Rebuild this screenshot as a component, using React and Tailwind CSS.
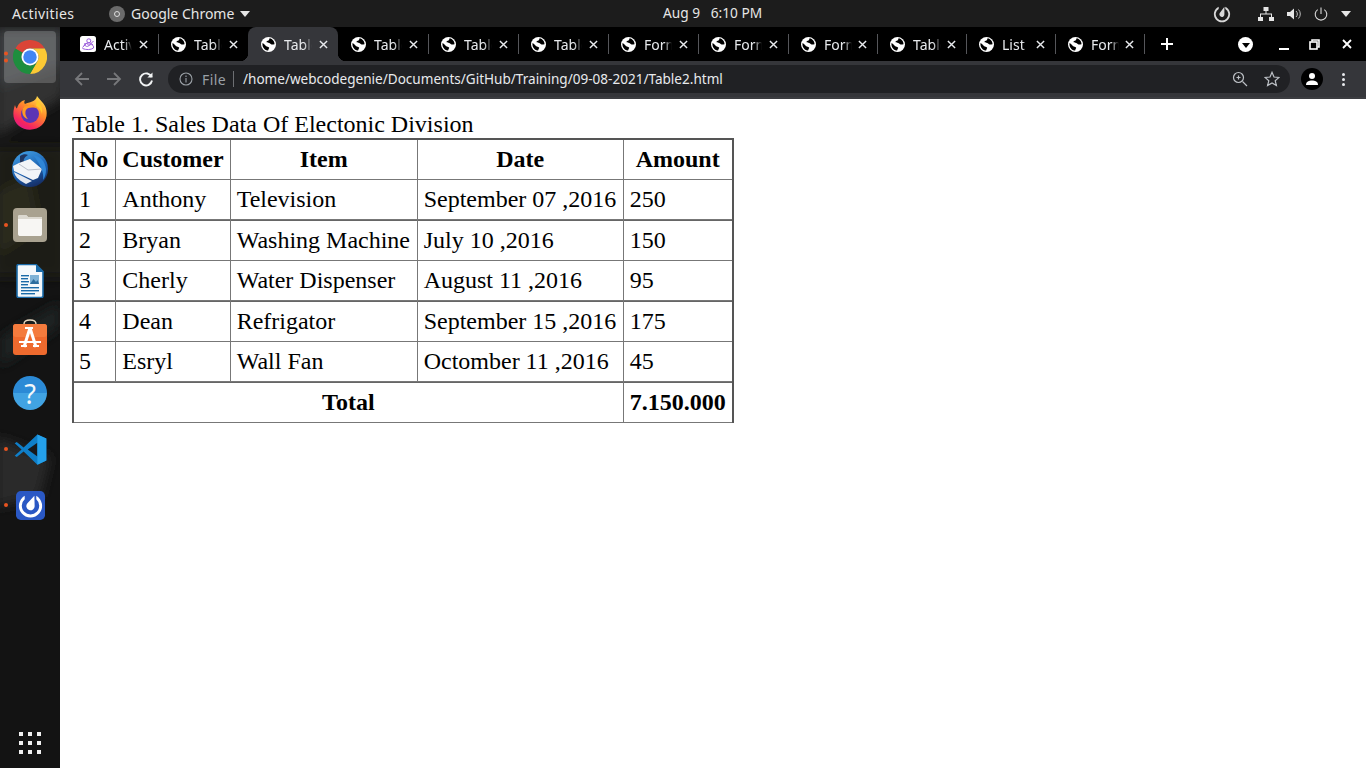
import React from "react";

const Globe = () => (
  <svg width="15" height="15" viewBox="0 0 16 16" className="ml-px shrink-0">
    <circle cx="8" cy="8" r="8" fill="#fff" />
    <path d="M9.2 1.2 C8.6 2.2 8.9 3 8 3.6 C7 4.2 6 4 5.9 5.1 C5.9 6 7.1 6 7.9 6.1 C9 6.2 9.8 6.9 10.7 7.6 C11.5 8.2 12.6 7.9 14.4 7.7 C14.6 4.6 12.3 1.8 9.2 1.2 Z" fill="#000" />
    <path d="M1.7 6.3 C1 9.2 2.6 12.6 5.7 14.1 C6.7 14.4 7.5 14.5 7.8 14.2 C7.8 13.2 8.5 12.6 8.7 11.8 C8.8 10.9 7.8 10.6 7 10.3 C5.9 10 5.1 9.5 4.5 8.7 C3.7 7.8 2.8 7 1.7 6.3 Z" fill="#000" />
  </svg>
);

const ActiIcon = () => (
  <svg width="16" height="16" viewBox="0 0 16 16" className="shrink-0">
    <rect width="16" height="16" rx="2.5" fill="#fff" />
    <g fill="none" stroke="#9a5bdc" strokeWidth="1">
      <path d="M2.5 11.5 L6.5 7 L9 9.5 L13.5 5" />
      <path d="M2.5 12.5 C6 14 11 14 13.5 12 C14 9 11 7.5 9 9.5 C7 11.5 4 10 5 7" />
      <circle cx="8.8" cy="4.8" r="2" />
      <path d="M4 10 C6 6 10 6 13 9" />
    </g>
  </svg>
);

const tabs = [
  ["Activity", "w-[90px]"],
  ["Table", "w-[90px]"],
  ["Table", "w-[90px]", true],
  ["Table", "w-[90px]"],
  ["Table", "w-[90px]"],
  ["Table", "w-[90px]"],
  ["Form", "w-[90px]"],
  ["Form", "w-[90px]"],
  ["Form", "w-[89px]"],
  ["Table", "w-[89px]"],
  ["List", "w-[89px]"],
  ["Form", "w-[89px]"],
];

const Close = ({ s = 9, c = "#e8eaed", w = 1.6 }) => (
  <svg width={s} height={s} viewBox="0 0 10 10" className="shrink-0">
    <path d="M1 1 L9 9 M9 1 L1 9" stroke={c} strokeWidth={w} />
  </svg>
);

function Tab({ title, width, active, first, hideSep }) {
  return (
    <div className={`relative flex h-[34px] shrink-0 items-center pl-3 pr-[10px] ${width} ${active ? "rounded-t-lg bg-[#35363a]" : ""}`}>
      {first ? <ActiIcon /> : <Globe />}
      <span className="ml-2 w-[28px] overflow-hidden whitespace-nowrap text-[14px] text-[#e8eaed] [mask-image:linear-gradient(to_right,black_72%,transparent_100%)]">
        {title}
      </span>
      <span className="ml-auto flex"><Close /></span>
      {!active && !hideSep && <span className="absolute right-[-1px] top-[7px] h-5 w-px bg-[#55565a]" />}
      {active && (
        <>
          <span className="absolute -left-2 bottom-0 h-2 w-2 bg-[radial-gradient(circle_at_0_0,#000_8px,#35363a_8.5px)]" />
          <span className="absolute -right-2 bottom-0 h-2 w-2 bg-[radial-gradient(circle_at_100%_0,#000_8px,#35363a_8.5px)]" />
        </>
      )}
    </div>
  );
}

const ChromeLogo = ({ size = 34 }) => (
  <svg width={size} height={size} viewBox="0 0 48 48">
    <path d="M3.2 12 A24 24 0 0 1 44.8 12 L24 12 A12 12 0 0 0 13.6 18 Z" fill="#db4437" />
    <path d="M44.8 12 A24 24 0 0 1 24 48 L34.4 30 A12 12 0 0 0 24 12 Z" fill="#fcc934" />
    <path d="M3.2 12 A24 24 0 0 0 24 48 L34.4 30 A12 12 0 0 1 13.6 18 Z" fill="#1e8e3e" />
    <circle cx="24" cy="24" r="12" fill="#fff" />
    <circle cx="24" cy="24" r="9.5" fill="#4285f4" />
  </svg>
);

const Firefox = () => (
  <svg width="36" height="36" viewBox="0 0 36 36">
    <defs>
      <linearGradient id="ff" x1="0.8" y1="0" x2="0.2" y2="1">
        <stop offset="0" stopColor="#ffe14d" />
        <stop offset="0.4" stopColor="#ff8a2a" />
        <stop offset="0.8" stopColor="#f5245f" />
        <stop offset="1" stopColor="#d91a8c" />
      </linearGradient>
    </defs>
    <path d="M25 1 C27 4 31 7 33 11 C36 17 35 25 30 30 C24 36 13 36 7 31 C1 26 0 18 3 10 C3.5 12 4 13 5 13.5 C6 9 9 6 13 5 C12 7 12 8 13 9 C17 7 24 7 25 1 Z" fill="url(#ff)" />
    <circle cx="18" cy="19" r="9" fill="#5b35b5" />
    <path d="M11 13 C15 8 23 9 26 14 C22 12 16 12 14 15 C13 17 13 21 16 24 C11 23 9 17 11 13 Z" fill="#ff9a24" />
    <path d="M25 5 C29 9 31 13 30 19 C29 15 27 12 24 11 Z" fill="#ffc928" />
  </svg>
);

const Thunderbird = () => (
  <svg width="36" height="36" viewBox="0 0 36 36">
    <defs>
      <linearGradient id="tb" x1="0.3" y1="0" x2="0.7" y2="1">
        <stop offset="0" stopColor="#3f9ae0" />
        <stop offset="0.55" stopColor="#1a5fb0" />
        <stop offset="1" stopColor="#15295e" />
      </linearGradient>
    </defs>
    <circle cx="18" cy="18" r="18" fill="url(#tb)" />
    <path d="M8 5 C11 3 14 3 16 4 C13 6 11 8 12 11 L8 13 Z" fill="#1f3560" />
    <path d="M1 15 L7 12 L18 8 L30 18 L26 27 L21 29 L2 20 Z" fill="#f2f4f8" />
    <path d="M7 13 L16 19 L30 18" fill="none" stroke="#a9b0bf" strokeWidth="0.8" />
    <path d="M2 21 L20 30 L14 33 C8 30 3 26 2 21 Z" fill="#e4e8f0" />
    <path d="M21 4 C28 5 33 10 34 18 C34 23 33 26 31 29 C32 23 30 15 21 4 Z" fill="#2f86d6" />
  </svg>
);

const Files = () => (
  <svg width="34" height="34" viewBox="0 0 34 34">
    <rect width="34" height="34" rx="4" fill="#a9a290" />
    <path d="M5 9 C5 7.5 6 7 7 7 H13 L15 9 H27 C28.5 9 29 10 29 11 V26 C29 27.5 28 28 27 28 H7 C6 28 5 27.5 5 26 Z" fill="#f7f6f3" />
    <path d="M5 9 C5 7.5 6 7 7 7 H13 L15 9 H29 V11 H5 Z" fill="#dcd9d0" />
  </svg>
);

const Writer = () => (
  <svg width="28" height="34" viewBox="0 0 28 34">
    <path d="M1 2 C1 1 2 0.5 3 0.5 H20 L27 7.5 V32 C27 33 26 33.5 25 33.5 H3 C2 33.5 1 33 1 32 Z" fill="#f4f8fb" stroke="#1a6aa8" strokeWidth="1.6" />
    <path d="M20 0.5 L27.5 8 H20 Z" fill="#1a6aa8" />
    <g fill="#1a6aa8">
      <rect x="5" y="11" width="8" height="1.4" />
      <rect x="5" y="14" width="7" height="1.4" />
      <rect x="5" y="17" width="8" height="1.4" />
      <rect x="5" y="20" width="7" height="1.4" />
      <rect x="5" y="23" width="18" height="1.4" />
      <rect x="5" y="26" width="18" height="1.4" />
      <rect x="5" y="29" width="14" height="1.4" />
    </g>
    <rect x="14" y="11" width="9" height="9" fill="#7fb2d6" />
    <path d="M14 20 L17.5 15 L20 18 L21.5 16 L23 20 Z" fill="#2d6d9e" />
  </svg>
);

const Store = () => (
  <svg width="34" height="36" viewBox="0 0 34 36">
    <path d="M11 8 V5 C11 2.5 13 1 17 1 C21 1 23 2.5 23 5 V8" fill="none" stroke="#e8d8c0" strokeWidth="1.4" />
    <rect y="5" width="34" height="31" rx="3" fill="#ee6a2e" />
    <rect y="5" width="34" height="13" rx="3" fill="#f47b3d" />
    <path d="M17 9 L11 28 M17 9 L23 28" stroke="#fff" strokeWidth="3" fill="none" />
    <path d="M12 9 H20 M6 23 H28 M8 27 H14 M20 27 H26" stroke="#fff" strokeWidth="2" fill="none" />
  </svg>
);

const Help = () => (
  <div className="flex h-[34px] w-[34px] items-center justify-center rounded-full bg-[linear-gradient(#2b8ad6_50%,#41a3e3_50%)] font-['Noto_Sans',sans-serif] text-[27px] font-normal leading-none text-[#f2f7fb]">
    ?
  </div>
);

const VSCode = () => (
  <svg width="33" height="33" viewBox="0 0 24 24">
    <path d="M17 1 L23.5 4 V20 L17 23 L7 13.5 L2 17.5 L0.5 16.5 L5.5 12 L0.5 7.5 L2 6.5 L7 10.5 Z" fill="#0f7fc9" />
    <path d="M17 7 L10 12 L17 17 Z" fill="#17191c" />
    <path d="M17 1 L23.5 4 V20 L17 23 Z" fill="#24a0ea" />
  </svg>
);

const Mattermost = ({ size = 30, bg = true, color = "#fff" }) => (
  <svg width={size} height={size} viewBox="0 0 30 30">
    {bg && <rect width="30" height="30" rx="5" fill="#2a58c4" />}
    <path d="M9 5 A12 12 0 1 0 21 5 L21 8.6 A9 9 0 1 1 9 8.6 Z" fill={color} />
    <path d="M19 5 L19.3 15.5 A4.3 4.3 0 1 1 11.6 13 Z" fill={color} />
  </svg>
);

const dockItems = [
  [<ChromeLogo key="a" />, 2, true],
  [<Firefox key="b" />, 0],
  [<Thunderbird key="c" />, 0],
  [<Files key="d" />, 1],
  [<Writer key="e" />, 0],
  [<Store key="f" />, 0],
  [<Help key="g" />, 0],
  [<VSCode key="h" />, 1],
  [<Mattermost key="i" size={29} />, 1],
];

function DockItem({ icon, dots, active }) {
  return (
    <div className="relative flex h-14 w-full items-center justify-center">
      {active && <div className="absolute inset-x-1 inset-y-[2px] rounded-[4px] bg-[#ffffff30]" />}
      <div className="relative flex h-9 w-9 items-center justify-center">{icon}</div>
      {dots > 0 && (
        <div className="absolute left-[4px] top-1/2 flex -translate-y-1/2 flex-col gap-[3px]">
          {Array.from({ length: dots }).map((_, i) => (
            <span key={i} className="h-1 w-1 rounded-full bg-[#e95420]" />
          ))}
        </div>
      )}
    </div>
  );
}

const rows = [
  ["1", "Anthony", "Television", "September 07 ,2016", "250"],
  ["2", "Bryan", "Washing Machine", "July 10 ,2016", "150"],
  ["3", "Cherly", "Water Dispenser", "August 11 ,2016", "95"],
  ["4", "Dean", "Refrigator", "September 15 ,2016", "175"],
  ["5", "Esryl", "Wall Fan", "Octomber 11 ,2016", "45"],
];

const tdc = "border border-[#777] px-[6px] py-[6.25px] text-left font-normal";
const thc = "border border-[#777] px-[6px] py-[5.9px] text-center font-bold";
const totalc = "border border-[#777] px-[6px] py-[6.25px] text-center font-bold shadow-[inset_0_1px_0_#666]";
const widths = ["pl-[5px] pr-[7px]", "", "min-w-[187px]", "min-w-[206px]", ""];

export default function App() {
  return (
    <div className="flex h-[768px] w-[1366px] flex-col overflow-hidden bg-white font-['Noto_Sans',sans-serif]">
      {/* top bar */}
      <div className="flex h-[27px] shrink-0 items-center bg-[#1c1c1c] text-[14px] text-[#e6e6e6]">
        <div className="flex w-[420px] items-center pl-3">
          <span className="w-[97px] tracking-[0.4px]">Activities</span>
          <span className="mr-1 flex h-4 w-4 items-center justify-center rounded-full bg-[#6b6b6b]">
            <span className="h-[6px] w-[6px] rounded-full border border-[#ddd]" />
          </span>
          <span className="ml-[2px]">Google Chrome</span>
          <svg width="10" height="6" viewBox="0 0 10 6" className="ml-[6px]"><path d="M0 0 H10 L5 6 Z" fill="#e6e6e6" /></svg>
        </div>
        <div className="ml-[243px] whitespace-pre text-[13.7px]">Aug 9   6:10 PM</div>
        <div className="ml-auto flex items-center pr-[15px]">
          <svg width="18" height="18" viewBox="0 0 30 30" className="mr-[27px]">
            <path d="M9.5 3 A13.5 13.5 0 1 0 20.5 3 L20.5 6.5 A10.5 10.5 0 1 1 9.5 6.5 Z" fill="#d8d8d8" />
            <path d="M19 3 L19 15.5 A4.2 4.2 0 1 1 11.6 13 Z" fill="#d8d8d8" />
          </svg>
          <svg width="16" height="14" viewBox="0 0 16 14" className="mr-[13px]" fill="#e6e6e6">
            <rect x="5.5" y="0" width="5" height="4" />
            <rect x="0" y="10" width="5" height="4" />
            <rect x="11" y="10" width="5" height="4" />
            <path d="M7.5 4 H8.5 V6.5 H14 V10 H13 V7.5 H3 V10 H2 V6.5 H7.5 Z" />
          </svg>
          <svg width="15" height="12" viewBox="0 0 15 12" className="mr-[12px]">
            <path d="M0 4 H3 L7 0.5 V11.5 L3 8 H0 Z" fill="#e6e6e6" />
            <path d="M9 3 A4 4 0 0 1 9 9 M11.5 1.5 A6.5 6.5 0 0 1 11.5 10.5" fill="none" stroke="#bbb" strokeWidth="1" />
          </svg>
          <svg width="14" height="14" viewBox="0 0 14 14" className="mr-[13px]" fill="none" stroke="#d8d8d8" strokeWidth="1.1">
            <path d="M7 0.5 V7 M3.7 2.6 A5.8 5.8 0 1 0 10.3 2.6" />
          </svg>
          <svg width="10" height="6" viewBox="0 0 10 6"><path d="M0 0 H10 L5 6 Z" fill="#e6e6e6" /></svg>
        </div>
      </div>

      <div className="flex min-h-0 flex-1">
        {/* dock */}
        <div className="relative flex w-[60px] shrink-0 flex-col overflow-hidden bg-[#131313] pt-[2px]">
          <svg className="absolute inset-0" width="60" height="741" viewBox="0 0 60 741">
            <defs>
              <filter id="bl"><feGaussianBlur stdDeviation="6" /></filter>
            </defs>
            <g filter="url(#bl)">
              <rect x="-5" y="0" width="70" height="60" fill="#3c4042" />
              <path d="M-5 62 L60 38 L65 70 L30 90 L-5 110 Z" fill="#303232" />
              <rect x="-5" y="120" width="70" height="130" fill="#1b1c15" />
              <path d="M-5 165 L30 150 L40 200 L-5 230 Z" fill="#2a2a1c" />
              <path d="M0 310 L60 275 L60 300 L0 340 Z" fill="#1d2020" />
              <path d="M-5 410 L50 430 L40 470 L-5 480 Z" fill="#2a2b2b" />
            </g>
          </svg>
          {dockItems.map(([icon, dots, active], i) => (
            <DockItem key={i} icon={icon} dots={dots} active={active} />
          ))}
          <div className="relative mt-auto mb-[14px] grid w-fit grid-cols-3 gap-[5px] self-center">
            {Array.from({ length: 9 }).map((_, i) => (
              <span key={i} className="h-1 w-1 bg-[#f0f0f0]" />
            ))}
          </div>
        </div>

        {/* browser */}
        <div className="flex min-w-0 flex-1 flex-col">
          <div className="flex h-[34px] shrink-0 items-center bg-black pl-2">
            {tabs.map(([t, w, a], i) => (
              <Tab key={i} title={t} width={w} active={a} first={i === 0} hideSep={i === 1} />
            ))}
            <svg width="12" height="12" viewBox="0 0 12 12" className="ml-[17px] shrink-0">
              <path d="M6 0 V12 M0 6 H12" stroke="#fff" strokeWidth="2" />
            </svg>
            <div className="ml-[65px] flex h-[15px] w-[15px] items-center justify-center rounded-full bg-white">
              <span className="mt-[2px] h-0 w-0 border-x-[4px] border-t-[5px] border-x-transparent border-t-black" />
            </div>
            <span className="ml-[26px] mt-[9px] h-[2px] w-[10px] bg-white" />
            <svg width="11" height="11" viewBox="0 0 11 11" className="ml-[20px]" fill="none" stroke="#fff">
              <path d="M3 2.5 V1 H10 V8 H8.5" strokeWidth="1.6" />
              <rect x="1" y="3" width="7" height="7" strokeWidth="1.6" fill="#000" />
            </svg>
            <span className="ml-[22px] flex"><Close s={10} c="#fff" w={1.8} /></span>
          </div>

          <div className="flex h-[38px] shrink-0 items-center border-b-2 border-b-[#3c3d41] bg-[#35363a] pl-[14px]">
            <svg width="16" height="16" viewBox="0 0 16 16" fill="none" stroke="#77787b" strokeWidth="1.8">
              <path d="M15 8 H2 M8 2 L2 8 L8 14" />
            </svg>
            <svg width="16" height="16" viewBox="0 0 16 16" fill="none" stroke="#77787b" strokeWidth="1.8" className="ml-4">
              <path d="M1 8 H14 M8 2 L14 8 L8 14" />
            </svg>
            <svg width="16" height="16" viewBox="0 0 16 16" fill="none" stroke="#f1f3f4" strokeWidth="1.9" className="ml-4">
              <path d="M13.6 6 A6 6 0 1 0 14 9.5" />
              <path d="M14.5 1.5 V6.6 H9.4 Z" fill="#f1f3f4" stroke="none" />
            </svg>
            <div className="ml-[14px] flex h-[28px] w-[1122px] items-center rounded-full bg-[#202124] pl-[11px] pr-[10px]">
              <svg width="14" height="14" viewBox="0 0 14 14" fill="none" stroke="#9aa0a6" strokeWidth="1.1">
                <circle cx="7" cy="7" r="6" />
                <path d="M7 6 V10.5 M7 3.5 V5" />
              </svg>
              <span className="ml-[9px] text-[14px] tracking-[0.4px] text-[#9aa0a6]">File</span>
              <span className="ml-[7px] h-[16px] w-px bg-[#6d6f73]" />
              <span className="ml-[9px] whitespace-nowrap text-[13.55px] text-[#e8eaed]">
                /home/webcodegenie/Documents/GitHub/Training/09-08-2021/Table2.html
              </span>
              <svg width="16" height="16" viewBox="0 0 16 16" fill="none" stroke="#bdc1c6" strokeWidth="1.2" className="ml-auto">
                <circle cx="6.5" cy="6.5" r="5" />
                <path d="M10.5 10.5 L15 15 M4.5 6.5 H8.5 M6.5 4.5 V8.5" />
              </svg>
              <svg width="16" height="16" viewBox="0 0 16 16" fill="none" stroke="#bdc1c6" strokeWidth="1.2" className="ml-4">
                <path d="M8 1.3 L10 6 L15 6.4 L11.2 9.7 L12.4 14.6 L8 12 L3.6 14.6 L4.8 9.7 L1 6.4 L6 6 Z" />
              </svg>
            </div>
            <div className="ml-[11px] flex h-[22px] w-[22px] items-center justify-center rounded-full bg-black">
              <svg width="14" height="14" viewBox="0 0 14 14" fill="#fff">
                <circle cx="7" cy="4" r="3" />
                <path d="M1 13 C1 9.5 4 8.5 7 8.5 C10 8.5 13 9.5 13 13 Z" />
              </svg>
            </div>
            <div className="ml-[19px] flex flex-col gap-[2px]">
              <span className="h-[3px] w-[3px] rounded-full bg-[#e8eaed]" />
              <span className="h-[3px] w-[3px] rounded-full bg-[#e8eaed]" />
              <span className="h-[3px] w-[3px] rounded-full bg-[#e8eaed]" />
            </div>
          </div>

          {/* page */}
          <div className="flex-1 bg-white p-3 font-['Liberation_Serif',serif] text-[24px] leading-[normal] text-black">
            <table className="border-collapse border-x-2 border-t-2 border-b border-x-[#555] border-t-[#555] border-b-[#777]">
              <caption className="text-left">Table 1. Sales Data Of Electonic Division</caption>
              <thead>
                <tr>
                  {["No", "Customer", "Item", "Date", "Amount"].map((h, i) => (
                    <th key={h} className={`${thc} ${widths[i]}`}>{h}</th>
                  ))}
                </tr>
              </thead>
              <tbody>
                {rows.map((r, ri) => (
                  <tr key={r[0]}>
                    {r.map((c, i) => (
                      <td key={i} className={`${tdc} ${i === 0 ? widths[0] : ""} ${ri % 2 === 1 ? "shadow-[inset_0_1px_0_#666]" : ""}`}>{c}</td>
                    ))}
                  </tr>
                ))}
                <tr>
                  <td colSpan={4} className={totalc}>Total</td>
                  <td className={totalc}>7.150.000</td>
                </tr>
              </tbody>
            </table>
          </div>
        </div>
      </div>
    </div>
  );
}
